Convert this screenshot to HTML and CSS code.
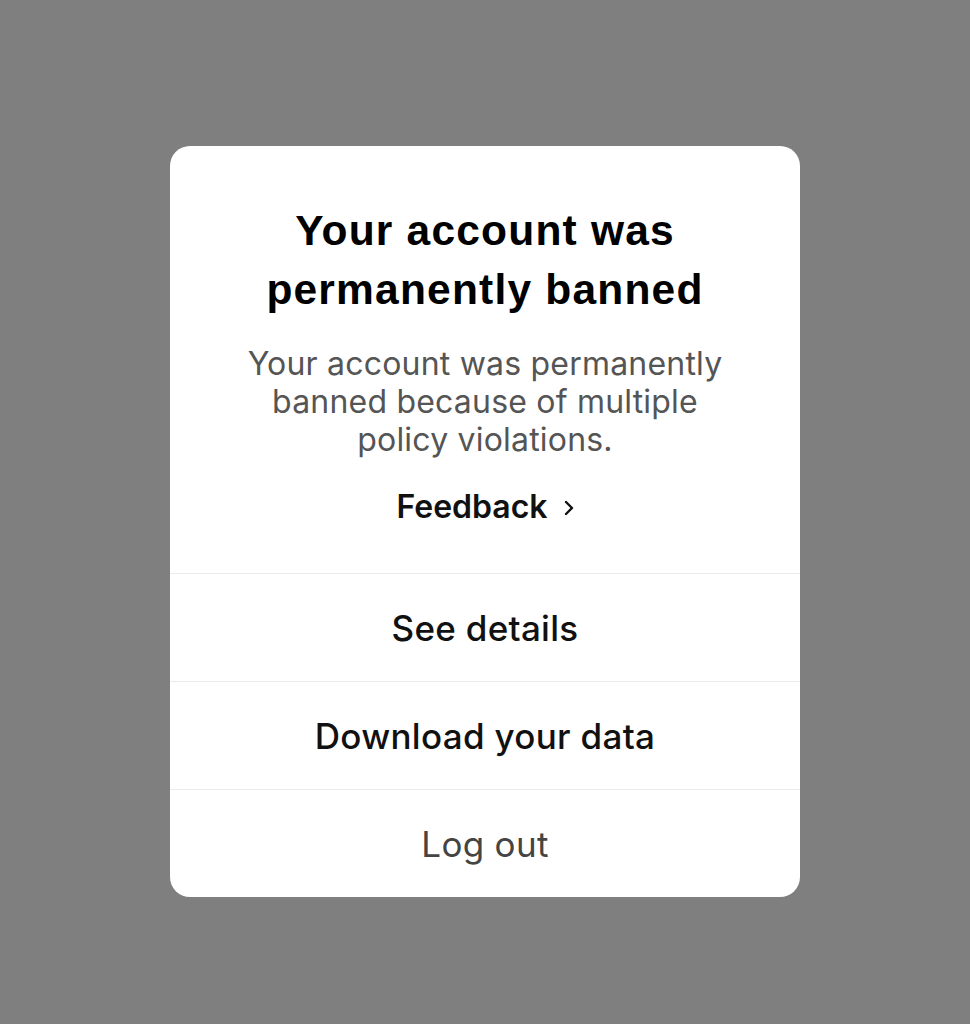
FILE: index.html
```html
<!DOCTYPE html>
<html lang="en">

<head>
    <meta charset="UTF-8">
    <meta name="viewport" content="width=device-width, initial-scale=1.0">
    <title>Account banned</title>
    <link rel="stylesheet" href="styles.css">
</head>

<body>
    <div class="dialog">
        <div class="dialog-body">
            <h1 class="title">Your account was<br>permanently banned</h1>
            <p class="message">Your account was permanently<br>banned because of multiple<br>policy violations.</p>
            <a class="feedback" href="#">
                Feedback
                <svg class="chevron" viewBox="0 0 10 16" width="10" height="16">
                    <path d="M2 2 L8 8 L2 14" fill="none" stroke="#111" stroke-width="2.4" stroke-linecap="round" stroke-linejoin="round" />
                </svg>
            </a>
        </div>
        <button class="action">See details</button>
        <button class="action">Download your data</button>
        <button class="action logout">Log out</button>
    </div>
</body>

</html>
```

FILE: styles.css
```css
* {
    box-sizing: border-box;
    margin: 0;
    padding: 0;
}

body {
    font-family: Inter, "Liberation Sans", Arial, sans-serif;
    background-color: #7f7f7f;
    min-height: 1024px;
    display: flex;
    justify-content: center;
    align-items: flex-start;
    padding-top: 146px;
}

.dialog {
    width: 630px;
    background-color: #fff;
    border-radius: 20px;
    overflow: hidden;
    display: flex;
    flex-direction: column;
}

.dialog-body {
    display: flex;
    flex-direction: column;
    align-items: center;
    text-align: center;
    padding: 55px 30px 47px;
}

.title {
    font-family: "Liberation Sans", Arial, sans-serif;
    font-size: 42.5px;
    line-height: 59px;
    font-weight: bold;
    color: #000;
    letter-spacing: 1.2px;
}

.message {
    margin-top: 26px;
    font-size: 32px;
    line-height: 38px;
    letter-spacing: 0.2px;
    color: #555;
}

.feedback {
    margin-top: 29px;
    display: flex;
    align-items: center;
    gap: 16px;
    font-size: 32px;
    line-height: 38px;
    font-weight: 600;
    color: #111;
    text-decoration: none;
}

.chevron {
    margin-top: 2px;
}

.action {
    height: 108px;
    border: none;
    border-top: 1px solid #ebebeb;
    background: none;
    font-family: inherit;
    font-size: 35px;
    font-weight: 500;
    letter-spacing: 0.3px;
    color: #111;
    cursor: pointer;
}

.logout {
    font-weight: normal;
    color: #444;
}
```
